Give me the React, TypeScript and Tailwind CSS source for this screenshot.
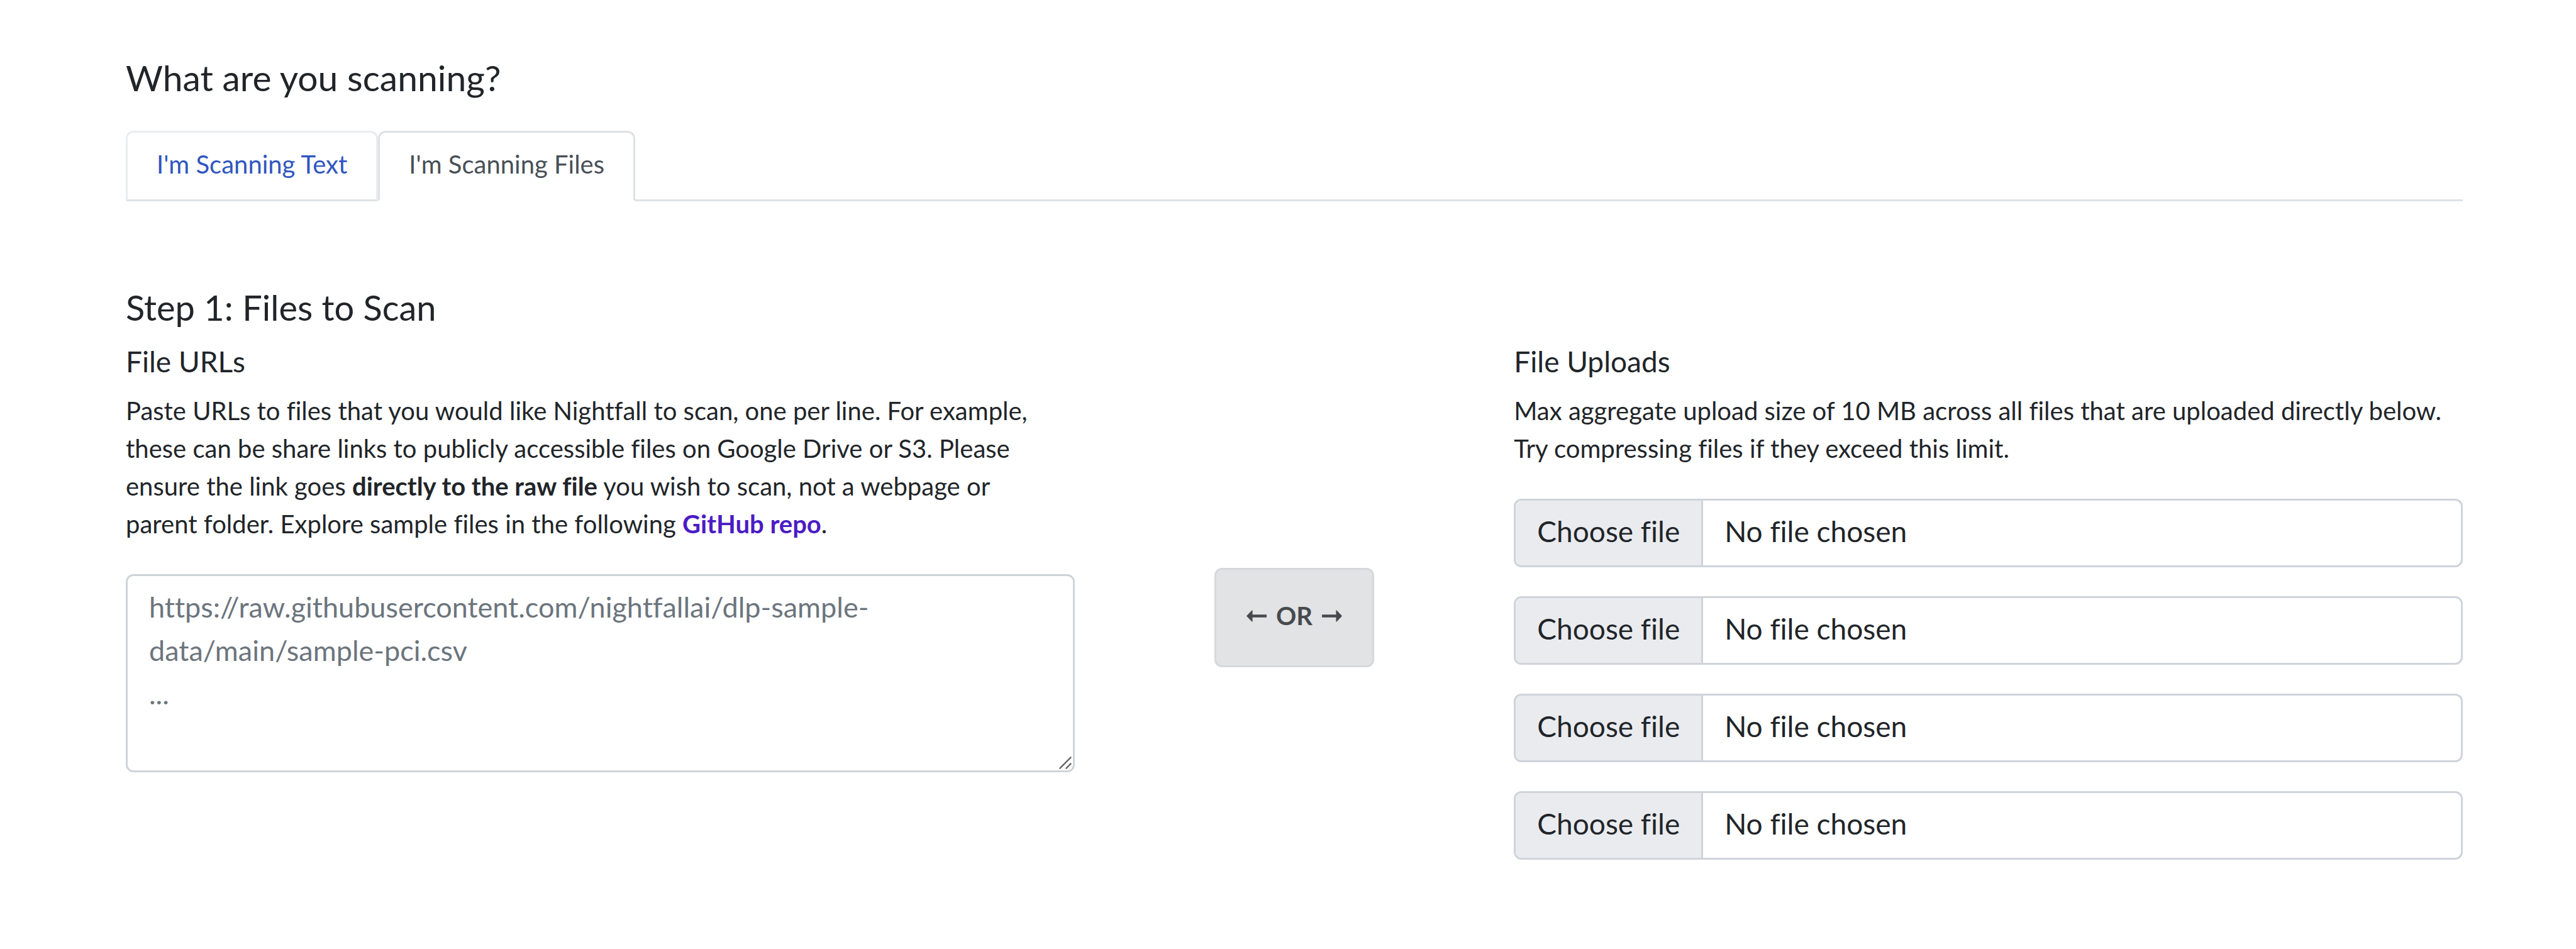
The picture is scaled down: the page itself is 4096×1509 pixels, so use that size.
import { useState } from "react";

const placeholder =
  "https://raw.githubusercontent.com/nightfallai/dlp-sample-data/main/sample-pci.csv\n...";

const tabs = ["I'm Scanning Text", "I'm Scanning Files"];

function Arrow({ flipped = false }: { flipped?: boolean }) {
  return (
    <svg
      viewBox="0 0 45 26"
      className={flipped ? "h-[19px] w-8 rotate-180" : "h-[19px] w-8"}
      fill="currentColor"
      aria-hidden="true"
    >
      <path d="M0 13 12 0.5Q13.5 -0.5 13.5 1V10H45V16H13.5V25Q13.5 26.5 12 25.5Z" />
    </svg>
  );
}

function ResizeGrip() {
  return (
    <svg
      viewBox="0 0 28 28"
      className="pointer-events-none absolute right-[5px] bottom-[5px] size-5"
      fill="none"
      stroke="#666666"
      strokeWidth="3.4"
      strokeLinecap="round"
      aria-hidden="true"
    >
      <path d="M2 26 26 2M16 26 26 16" />
    </svg>
  );
}

function FileField({ index }: { index: number }) {
  const [name, setName] = useState("No file chosen");
  return (
    <label className="flex cursor-pointer overflow-hidden rounded-[12px] border-3 border-[#ced4da] bg-white text-[46px] leading-[69px] text-[#212529]">
      <input
        type="file"
        name={`file-${index}`}
        className="sr-only"
        onChange={(e) => setName(e.target.files?.[0]?.name ?? "No file chosen")}
      />
      <span className="border-r-3 border-[#ced4da] bg-[#eaebef] px-[34px] pt-[14px] pb-5">
        Choose file
      </span>
      <span className="px-[34px] pt-[14px] pb-5">{name}</span>
    </label>
  );
}

export default function App() {
  const [active, setActive] = useState(1);

  return (
    <main className="min-h-screen bg-white pt-[89px] pr-[180px] pb-[88px] pl-[200px] font-['Lato',sans-serif] text-[40px] leading-[60px] text-[#212529] [font-variant-ligatures:none]">
      <h2 className="mb-[51px] text-[57px] leading-[68px]">What are you scanning?</h2>

      <div role="tablist" className="mb-[135px] flex border-b-3 border-[#dee2e6]">
        {tabs.map((label, i) => (
          <button
            key={label}
            type="button"
            role="tab"
            aria-selected={active === i}
            onClick={() => setActive(i)}
            className={
              active === i
                ? "-mb-[3px] rounded-t-[12px] border-3 border-[#dee2e6] border-b-white bg-white px-[46px] pt-5 pb-[26px] text-[#495057]"
                : "-mb-[3px] rounded-t-[12px] border-3 border-[#e9ecef] border-b-[#dee2e6] px-[46px] pt-5 pb-[26px] text-[#3056c0]"
            }
          >
            {label}
          </button>
        ))}
      </div>

      <h2 className="mb-6 text-[56px] leading-[68px]">Step 1: Files to Scan</h2>

      <div className="-mx-[34px] grid grid-cols-12">
        <section className="col-span-5 px-[34px]">
          <h3 className="mb-5 text-[46px] leading-[56px]">
            <label htmlFor="file-urls">File URLs</label>
          </h3>
          <p className="pr-8">
            Paste URLs to files that you would like Nightfall to scan, one per line. For example,
            these can be share links to publicly accessible files on Google Drive or S3. Please
            ensure the link goes <strong className="font-bold">directly to the raw file</strong> you
            wish to scan, not a webpage or parent folder. Explore sample files in the following{" "}
            <a href="#sample-files" className="font-bold text-[#4b1cc4]">
              GitHub repo
            </a>
            .
          </p>
          <div className="relative mt-[50px]">
            <textarea
              id="file-urls"
              rows={4}
              placeholder={placeholder}
              className="block w-full resize-none overflow-hidden rounded-[12px] border-3 border-[#ced4da] px-[34px] pt-[15px] pb-[18px] text-[45px] leading-[69px] placeholder:text-[#6c757d]"
            />
            <ResizeGrip />
          </div>
        </section>

        <div className="col-span-2 flex items-center justify-center px-[34px]">
          <div className="flex items-center gap-[15px] rounded-[12px] border-3 border-[#d6d8db] bg-[#e2e3e5] px-12 pt-[43px] pb-[49px] font-bold text-[#464a4e]">
            <Arrow />
            <span>OR</span>
            <Arrow flipped />
          </div>
        </div>

        <section className="col-span-5 px-[34px] pb-[50px]">
          <h3 className="mb-5 text-[46px] leading-[56px]">File Uploads</h3>
          <p>
            Max aggregate upload size of 10 MB across all files that are uploaded directly below.
            Try compressing files if they exceed this limit.
          </p>
          <div className="mt-[50px] flex flex-col gap-[46px]">
            {[1, 2, 3, 4].map((n) => (
              <FileField key={n} index={n} />
            ))}
          </div>
        </section>
      </div>
    </main>
  );
}
